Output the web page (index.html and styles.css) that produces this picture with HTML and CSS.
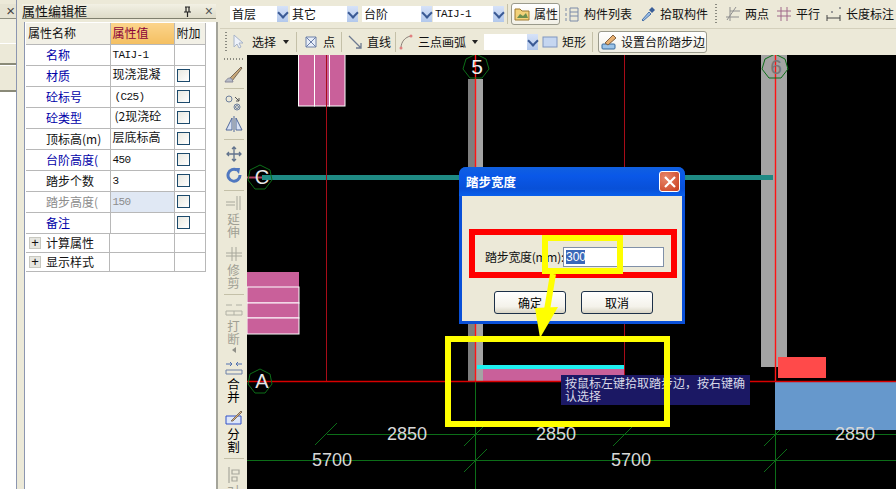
FILE: index.html
```html
<!DOCTYPE html>
<html lang="zh">
<head>
<meta charset="utf-8">
<title>属性编辑框</title>
<link rel="stylesheet" href="styles.css">
</head>
<body>
<div class="app">
  <aside class="sliver">
    <div class="sliver-head"><span class="close-x">×</span></div>
    <div class="sliver-bar"></div>
    <div class="sliver-btn first"></div>
    <div class="sliver-btn second"></div>
    <div class="sliver-list"></div>
  </aside>

  <section class="panel">
    <header class="panel-head">
      <span class="panel-title">属性编辑框</span>
      <svg class="pin" viewBox="0 0 9 11"><path d="M2 1h5M3 1v5M6 1v5M1 6h7M4.500 6v5" fill="none" stroke="#222" stroke-width="1.200"/></svg>
      <span class="panel-x">×</span>
    </header>
    <div class="panel-body">
      <table class="props">
        <colgroup><col class="c1"><col class="c2"><col class="c3"></colgroup>
        <tr class="hd"><th class="h-name">属性名称</th><th class="h-val">属性值</th><th class="h-add">附加</th></tr>
        <tr><td class="nm blue">名称</td><td class="vl mono">TAIJ-1</td><td></td></tr>
        <tr><td class="nm blue">材质</td><td class="vl up">现浇混凝</td><td><i class="cb"></i></td></tr>
        <tr><td class="nm blue">砼标号</td><td class="vl mono ind">(C25)</td><td><i class="cb"></i></td></tr>
        <tr><td class="nm blue">砼类型</td><td class="vl up ind">(2现浇砼</td><td><i class="cb"></i></td></tr>
        <tr><td class="nm">顶标高(m)</td><td class="vl up">层底标高</td><td><i class="cb"></i></td></tr>
        <tr><td class="nm blue">台阶高度(</td><td class="vl mono">450</td><td><i class="cb"></i></td></tr>
        <tr><td class="nm">踏步个数</td><td class="vl mono">3</td><td><i class="cb"></i></td></tr>
        <tr><td class="nm gray">踏步高度(</td><td class="vl mono gray shade">150</td><td><i class="cb"></i></td></tr>
        <tr><td class="nm blue">备注</td><td class="vl"></td><td><i class="cb"></i></td></tr>
        <tr class="grp"><td class="nm"><i class="plus">+</i>计算属性</td><td></td><td></td></tr>
        <tr class="grp"><td class="nm"><i class="plus">+</i>显示样式</td><td></td><td></td></tr>
      </table>
    </div>
  </section>

  <main class="work">
    <div class="bar bar-top">
      <div class="sel sel-a"><span>首层</span><i class="drop"></i></div>
      <div class="sel sel-b"><span>其它</span><i class="drop"></i></div>
      <div class="sel sel-c"><span>台阶</span><i class="drop"></i></div>
      <div class="sel sel-d"><span class="mono">TAIJ-1</span><i class="drop"></i></div>
      <span class="sep sep-attr"></span>
      <div class="tool-btn btn-attr">
        <svg class="ico" viewBox="0 0 16 16"><path d="M1 3h5l2 2h7v9H1z" fill="#f3d27a" stroke="#a07a30"/><path d="M3 12l3-4 3 2 3-3 2 5z" fill="#6d8f4e"/></svg>
        <span>属性</span>
      </div>
      <div class="tool ml-4">
        <svg class="ico" viewBox="0 0 16 16"><path d="M2 2v3M2 7v3M2 12v3M6 2h8v13H6zM6 6h8M6 10h8" fill="none" stroke="#7a8aa8"/></svg>
        <span>构件列表</span>
      </div>
      <div class="tool ml-8">
        <svg class="ico" viewBox="0 0 16 16"><path d="M2 14l7-8 2 2-8 7z" fill="#9cc0e8" stroke="#4a72a8"/><path d="M9 4l3-3 3 3-3 3z" fill="#3a5f98"/></svg>
        <span>拾取构件</span>
      </div>
      <span class="grip grip-b"></span>
      <div class="tool ml-8">
        <svg class="ico" viewBox="0 0 16 16"><path d="M1 11h13M5 5h10M5 1v14M11 1L2 14" fill="none" stroke="#8f8f8f"/></svg>
        <span>两点</span>
      </div>
      <div class="tool ml-7">
        <svg class="ico" viewBox="0 0 16 16"><path d="M1 5h14M1 10h14M5 1v14M11 1v14" fill="none" stroke="#a0688a"/></svg>
        <span>平行</span>
      </div>
      <div class="tool ml-6">
        <svg class="ico" viewBox="0 0 16 16"><path d="M1 9v6M14 9v6M1 12h13" fill="none" stroke="#444"/><path d="M5 5h2v2H5zM13 1h2v2h-2z" fill="#999"/></svg>
        <span>长度标注</span>
      </div>
    </div>

    <div class="bar bar-sub">
      <span class="grip grip-a"></span>
      <div class="tool ml-5 tight">
        <svg class="ico" viewBox="0 0 16 16"><path d="M2 1v12l3-3 2 4 2-1-2-4h4z" fill="#eef2fa" stroke="#a8b4c8"/></svg>
        <span>选择</span>
      </div>
      <i class="caret c-sel"></i>
      <span class="sep sep-sel"></span>
      <div class="tool ml-6">
        <svg class="ico" viewBox="0 0 16 16"><path d="M3 3h10v10H3zM3 3l10 10M13 3L3 13" fill="#e8eef8" stroke="#6d80a8"/></svg>
        <span>点</span>
      </div>
      <span class="sep sep-pt"></span>
      <div class="tool ml-5">
        <svg class="ico" viewBox="0 0 16 16"><path d="M2 2l12 12M14 9v5H9" fill="none" stroke="#6d7a90" stroke-width="1.300"/></svg>
        <span>直线</span>
      </div>
      <span class="sep sep-line"></span>
      <div class="tool ml-2">
        <svg class="ico" viewBox="0 0 16 16"><path d="M3 14C3 8 7 3 13 2" fill="none" stroke="#8a8078"/><circle cx="3" cy="14" r="1.500" fill="#e08080"/><circle cx="13" cy="2" r="1.500" fill="#e08080"/></svg>
        <span>三点画弧</span>
      </div>
      <i class="caret c-arc"></i>
      <div class="sel sel-e"><span></span><i class="drop"></i></div>
      <div class="tool ml-4">
        <svg class="ico" viewBox="0 0 16 16"><rect x="1" y="3" width="14" height="10" fill="#c5d6f0" stroke="#7f96c0"/></svg>
        <span>矩形</span>
      </div>
      <span class="sep sep-rect"></span>
      <div class="tool-btn btn-step">
        <svg class="ico" viewBox="0 0 16 16"><rect x="1" y="10" width="13" height="5" rx="1" fill="#9cc4e8" stroke="#386a9c"/><path d="M4 9l8-8 3 3-8 7z" fill="#e8b070" stroke="#806040"/></svg>
        <span>设置台阶踏步边</span>
      </div>
    </div>

    <div class="stage">
      <nav class="vtools">
        <span class="vgrip"></span>
        <svg class="vico i-brush" viewBox="0 0 20 20"><path d="M5 15L17 3l1 1L8 17z" fill="#c8a878" stroke="#7a6a58"/><path d="M1 18c2-4 5-5 7-3l1 3z" fill="#b8bcc8" stroke="#889"/></svg>
        <span class="vsep"></span>
        <svg class="vico i-offset" viewBox="0 0 18 16"><circle cx="4" cy="4" r="3" fill="none" stroke="#6d7f9c"/><circle cx="12" cy="12" r="3" fill="none" stroke="#6d7f9c"/><circle cx="12" cy="12" r="1.500" fill="none" stroke="#6d7f9c"/><path d="M10 2l4 4M14 3v3h-3" fill="none" stroke="#555"/></svg>
        <svg class="vico i-mirror" viewBox="0 0 18 16"><path d="M9 0v16M1 14L7 2v12zM17 14L11 2v12z" fill="#d8e2f4" stroke="#50689a"/></svg>
        <span class="vsep"></span>
        <svg class="vico i-move" viewBox="0 0 16 16"><path d="M8 1v14M1 8h14M6 3l2-2 2 2M6 13l2 2 2-2M3 6L1 8l2 2M13 6l2 2-2 2" fill="none" stroke="#60728c" stroke-width="1.300"/></svg>
        <svg class="vico i-rotate" viewBox="0 0 16 16"><path d="M11 3a6 6 0 1 0 3 5" fill="none" stroke="#5078c0" stroke-width="3"/><path d="M8 1l6 0-1 6z" fill="#5078c0"/></svg>
        <span class="vsep"></span>
        <svg class="vico i-ext" viewBox="0 0 18 16"><path d="M1 7h9M1 10h9M12 1v14M15 1v14" fill="none" stroke="#a8a89c"/></svg>
        <span class="vtxt dim">延伸</span>
        <svg class="vico i-trim" viewBox="0 0 18 14"><path d="M1 6h16M1 9h16M7 0v14M11 0v14" fill="none" stroke="#a8a89c"/></svg>
        <span class="vtxt dim">修剪</span>
        <span class="vsep"></span>
        <svg class="vico i-break" viewBox="0 0 18 14"><path d="M1 9h16v4H1zM9 9v4M1 3h6M11 3h6" fill="none" stroke="#b0b0a4"/></svg>
        <span class="vtxt dim">打断</span>
        <i class="small-tri"></i>
        <svg class="vico i-merge" viewBox="0 0 18 14"><path d="M1 9h16v4H1z" fill="none" stroke="#6d80a8"/><path d="M1 3h6M11 3h6M5 1l2 2-2 2M13 1l-2 2 2 2" fill="none" stroke="#5070b0"/></svg>
        <span class="vtxt">合并</span>
        <svg class="vico i-split" viewBox="0 0 18 15"><path d="M1 6h15v8H1z" fill="#dce6f8" stroke="#3050c8"/><path d="M6 11L16 1l1 1-9 9z" fill="#d8b080" stroke="#807060"/></svg>
        <span class="vtxt">分割</span>
        <span class="vsep"></span>
        <svg class="vico i-align" viewBox="0 0 14 16"><path d="M2 0v16M5 3h7v4H5zM5 10h5v4H5z" fill="none" stroke="#a8a89c" stroke-width="1.200"/></svg>
        <span class="vtxt dim">对</span>
      </nav>

      <svg class="canvas" viewBox="247 55 649 434">
        <g class="dimlines">
          <path d="M327 434.500H896M247 460.500H896M475.500 381V489M775.500 381V489"/>
          <path d="M315 445l22-22M464 446l22-22M613 446l22-22M764 446l22-22M464 472l23-23M764 472l23-23"/>
        </g>
        <rect class="pink" x="247" y="272" width="52" height="15"/>
        <rect class="pink-out" x="247" y="287" width="52" height="16"/>
        <rect class="pink-out" x="247" y="303" width="52" height="15"/>
        <rect class="pink-out" x="247" y="318" width="52" height="16"/>
        <rect class="pink-out" x="298.500" y="54" width="16" height="52"/>
        <rect class="pink-out" x="314.500" y="54" width="15" height="52"/>
        <rect class="pink-out" x="329.500" y="54" width="15.500" height="52"/>
        <rect class="col-lt" x="468" y="79" width="15" height="302"/>
        <rect class="col-dk" x="468" y="79" width="7" height="302"/>
        <rect class="col-lt" x="761" y="55" width="26" height="312"/>
        <rect x="483" y="368" width="141" height="13" class="pink"/>
        <rect x="477" y="365" width="148" height="4" class="cyan"/>
        <rect x="778" y="357" width="48" height="21" class="coral"/>
        <rect x="775" y="382" width="121" height="48" class="steel"/>
        <rect x="262" y="175" width="511" height="5" class="teal"/>
        <path class="red-dim" d="M326.500 55V381M624.500 55V381"/>
        <path class="red" d="M475.500 55V381M775.500 55V381"/>
        <path class="red-h" d="M247 381.500H896"/>
        <path class="red-c" d="M247 177.500H262"/>
        <polygon class="bubble" points="260,165 270,170 272,180 265,189 255,189 248,180 250,170"/>
        <polygon class="bubble" points="260,369 270,374 272,384 265,393 255,393 248,384 250,374"/>
        <polygon class="bubble" points="476,54 486,59 489,69 482,78 470,78 463,69 466,59"/>
        <polygon class="bubble" points="775,54 785,59 788,69 781,78 769,78 762,69 765,59"/>
        <text class="axis" x="262" y="184">C</text>
        <text class="axis" x="262" y="388">A</text>
        <text class="axis-lg" x="477" y="74">5</text>
        <text class="axis-lg gray-num" x="776" y="74">6</text>
        <text class="dim-t" x="407" y="440">2850</text>
        <text class="dim-t" x="556" y="440">2850</text>
        <text class="dim-t" x="855" y="440">2850</text>
        <text class="dim-t" x="332" y="466">5700</text>
        <text class="dim-t" x="631" y="466">5700</text>
      </svg>
    </div>
  </main>

  <div class="tip">按鼠标左键拾取踏步边，按右键确认选择</div>

  <div class="dialog">
    <div class="dlg-title">
      <span>踏步宽度</span>
      <span class="dlg-close"><svg viewBox="0 0 12 12"><path d="M1 1l10 10M11 1L1 11" stroke="#fff" stroke-width="2.200"/></svg></span>
    </div>
    <div class="dlg-body">
      <div class="dlg-row">
        <span class="dlg-label">踏步宽度(mm):</span>
        <div class="dlg-input"><span class="picked">300</span></div>
      </div>
      <div class="dlg-actions">
        <button class="dlg-btn">确定</button>
        <button class="dlg-btn">取消</button>
      </div>
    </div>
  </div>

  <svg class="marks" viewBox="0 0 896 489">
    <rect class="mark-red" x="472" y="232" width="202" height="43"/>
    <rect class="mark-y" x="545" y="238" width="75" height="33"/>
    <rect class="mark-y" x="448" y="339" width="219" height="85"/>
    <path class="mark-y" d="M553 274L547 310"/>
    <polygon class="mark-fill" points="535,308 558,307 540,338"/>
  </svg>
</div>
</body>
</html>
```
FILE: styles.css
```css
* { box-sizing: border-box; }
html, body { margin: 0; height: 100%; overflow: hidden; }
body { font: 12px/14px "Noto Sans CJK SC", "Liberation Sans", sans-serif; color: #111; background: #ece9d8; }
i { font-style: normal; display: block; }
.mono { font-family: "Liberation Mono", "Noto Sans CJK SC", monospace; font-size: 11px; letter-spacing: -.6px; }

.app { position: relative; display: flex; width: 896px; height: 489px; overflow: hidden; }

/* left docked stub */
.sliver { width: 17px; flex: none; display: flex; flex-direction: column; border-right: 1px solid #8c96b0; padding-top: 4px; }
.sliver-head { height: 15px; text-align: right; padding-right: 1px; background: #e6e3d2; border-bottom: 1px solid #8f8f80; }
.close-x { font: 15px/14px "Liberation Sans", sans-serif; color: #444; }
.sliver-bar { height: 24px; background: #f0eee0; }
.sliver-btn { background: #ece9d8; border-top: 1px solid #fff; border-bottom: 2px solid #8a8a78; }
.sliver-btn.first { height: 22px; }
.sliver-btn.second { height: 27px; }
.sliver-list { flex: 1; background: #fff; }

/* property panel */
.panel { width: 203px; flex: none; display: flex; flex-direction: column; padding: 4px 0 0 1px; }
.panel-head { height: 15px; margin: 0 4px 0 4px; display: flex; align-items: center; background: linear-gradient(#f2f0e4, #dedbc8); border-bottom: 1px solid #80806f; }
.panel-title { font-size: 13px; flex: 1; }
.pin { width: 9px; height: 11px; margin-right: 13px; }
.panel-x { font: 14px/14px "Liberation Sans", sans-serif; color: #555; margin-right: 3px; }
.panel-body { flex: 1; margin: 3px 2px 0 6px; background: #fff; border-left: 1px solid #8c96b0; border-right: 2px solid #a4a49a; padding: 1px 0 0 1px; }

.props { border-collapse: collapse; table-layout: fixed; width: 179px; }
.c1 { width: 84px; } .c2 { width: 64px; } .c3 { width: 31px; }
.props td, .props th { border: 1px solid #b8b8b8; border-width: 0 1px 1px 0; padding: 0; height: 21px; font-weight: 400; overflow: hidden; white-space: nowrap; text-align: left; }
.props .hd th { height: 21px; padding-left: 2px; background: #f2f0e6; }
.props .hd .h-val { background: linear-gradient(#fbd48c, #f4bf62); color: #8a0038; }
.props .nm { padding-left: 20px; }
.props .vl { padding-left: 2px; }
.props .ind { padding-left: 4px; }
.props .up { padding-bottom: 4px; }
.blue { color: #0000a8; }
.props .gray, .gray { color: #8c8c8c; }
.props .shade { background: #e0e8f4; }
.cb { width: 13px; height: 13px; margin-left: 2px; border: 1px solid #1c4a6c; background: linear-gradient(135deg, #e8e8e0, #fff); }
.props .grp td { height: 19px; }
.props .grp .nm { padding-left: 3px; display: flex; align-items: center; gap: 5px; }
.plus { width: 12px; height: 12px; background: #e6e6e0; border: 1px solid #c8c8c0; font: 13px/10px "Liberation Sans", sans-serif; text-align: center; }

/* work area */
.work { flex: 1; display: flex; flex-direction: column; min-width: 0; }
.bar { display: flex; align-items: center; background: #ece9d8; border-bottom: 1px solid #d4d0bc; }
.bar-top { height: 29px; padding-left: 10px; }
.bar-sub { height: 26px; padding-left: 5px; border-bottom: 0; }

.sel { height: 16px; background: #fff; display: flex; align-items: center; padding-left: 2px; justify-content: space-between; }
.sel-a { width: 58px; }
.sel-b { width: 68px; margin-left: 2px; }
.sel-c { width: 70px; margin-left: 4px; }
.sel-d { width: 71px; margin-left: 1px; }
.sel-e { width: 54px; margin-left: 6px; }
.drop { width: 11px; height: 16px; background: linear-gradient(#d6e2f8, #b2c8ec); position: relative; }
.drop::after { content: ""; position: absolute; left: 2px; top: 3px; width: 6px; height: 6px; border: solid #3a5a94; border-width: 0 2px 2px 0; transform: rotate(45deg); }

.sep { width: 1px; height: 20px; background: #c4c0a8; flex: none; }
.sep-attr { margin-left: 3px; }
.sep-sel { margin-left: 7px; }
.sep-pt { margin-left: 6px; }
.sep-line { margin-left: 4px; }
.sep-rect { margin-left: 6px; }
.grip { width: 2px; height: 20px; flex: none; background: repeating-linear-gradient(#8a8a80 0 1px, transparent 1px 3px); }
.grip-b { margin-left: 7px; }

.tool { display: flex; align-items: center; gap: 4px; white-space: nowrap; flex: none; }
.ico { width: 16px; height: 16px; flex: none; }
.ml-2 { margin-left: 2px; } .ml-4 { margin-left: 4px; } .ml-5 { margin-left: 5px; }
.ml-6 { margin-left: 6px; } .ml-7 { margin-left: 7px; } .ml-8 { margin-left: 8px; }
.tool-btn { display: flex; align-items: center; height: 22px; flex: none; border: 1px solid #9a9a8c; border-radius: 3px; background: linear-gradient(#fff, #f2f0e6); white-space: nowrap; padding-left: 2px; gap: 4px; }
.btn-attr { width: 49px; margin-left: 3px; }
.btn-step { width: 109px; margin-left: 5px; font-size: 12px; }
.caret { width: 0; height: 0; border: 3.500px solid transparent; border-top: 4px solid #222; border-bottom: 0; flex: none; }
.c-sel { margin-left: 7px; }
.c-arc { margin-left: 6px; }

/* drawing area */
.stage { flex: 1; display: flex; min-height: 0; background: #000; }
.vtools { width: 27px; flex: none; background: #ece9d8; display: flex; flex-direction: column; align-items: center; padding-top: 3px; color: #000; overflow: hidden; }
.vgrip { width: 20px; height: 2px; flex: none; background: repeating-linear-gradient(90deg, #8a8a80 0 1px, transparent 1px 3px); }
.vsep { width: 20px; height: 1px; flex: none; background: #c4c0a8; }
.vtxt + .vsep { margin-top: 5px; }
.vico { flex: none; display: block; }
.vtxt { width: 13px; font-size: 12.500px; line-height: 13px; text-align: center; flex: none; white-space: normal; }
.vtxt.dim { color: #a0a094; }
.i-brush { width: 20px; height: 20px; margin: 4px 0; }
.i-offset { width: 18px; height: 16px; margin: 6px 0 5px; }
.i-mirror { width: 18px; height: 16px; margin-bottom: 7px; }
.i-move { width: 16px; height: 16px; margin: 6px 0 5px; }
.i-rotate { width: 16px; height: 16px; margin-bottom: 7px; }
.i-ext { width: 18px; height: 16px; margin: 4px 0 1px; }
.i-trim { width: 18px; height: 14px; margin: 9px 0 2px; }
.i-break { width: 18px; height: 14px; margin: 7px 0 3px; }
.i-merge { width: 18px; height: 14px; margin: 8px 0 2px; }
.i-split { width: 18px; height: 15px; margin: 7px 0 2px; }
.i-align { width: 14px; height: 16px; margin: 8px 0 1px; }
.small-tri { width: 0; height: 0; margin-top: 2px; border: 3px solid transparent; border-right: 4px solid #909088; border-left: 0; }

.canvas { flex: 1; display: block; min-width: 0; height: 434px; }
.dimlines path { fill: none; stroke: #0c6e18; stroke-width: 1; }
.pink { fill: #c9609a; }
.pink-out { fill: #c9609a; stroke: #fff; stroke-width: 1; }
.col-lt { fill: #a4a4a4; }
.col-dk { fill: #7e7e7e; }
.cyan { fill: #1ef0f0; }
.coral { fill: #ff4a4a; }
.steel { fill: #6698cc; }
.teal { fill: #1f8a84; }
.red { stroke: #ff1414; stroke-width: 1.400; fill: none; }
.red-dim { stroke: #a80c18; fill: none; }
.red-h { stroke: #d80000; stroke-width: 1.400; fill: none; }
.red-c { stroke: #b04060; stroke-width: 2; fill: none; }
.bubble { fill: none; stroke: #0c6e18; stroke-width: 1; }
.axis { font: 20px "Liberation Sans", sans-serif; fill: #e8e8e8; text-anchor: middle; }
.axis-lg { font: 21px "Liberation Sans", sans-serif; fill: #f0f0f0; text-anchor: middle; }
.axis-lg.gray-num { fill: #777; }
.dim-t { font: 18px "Liberation Sans", sans-serif; fill: #d8d8d8; text-anchor: middle; }

/* overlays */
.tip { position: absolute; left: 561px; top: 375px; width: 189px; height: 30px; padding: 1px 4px; background: #1b1864; color: #d8d8e8; font-size: 12px; line-height: 13px; }

.dialog { position: absolute; left: 459px; top: 167px; width: 226px; height: 157px; border-radius: 7px 7px 0 0; background: #0a50d8; padding: 0 3px 3px; display: flex; flex-direction: column; }
.dlg-title { height: 29px; flex: none; margin: 0 -3px; padding: 0 5px 0 7px; border-radius: 7px 7px 0 0; display: flex; align-items: center; justify-content: space-between; background: linear-gradient(#1060e0, #0a58e8 30%, #0850d8 75%, #0a60ec); color: #fff; font-weight: 700; font-size: 12.500px; }
.dlg-close { width: 21px; height: 21px; display: flex; align-items: center; justify-content: center; border: 1px solid #fff; border-radius: 3px; background: radial-gradient(circle at 30% 30%, #e8886c, #c83c1c); }
.dlg-close svg { width: 12px; height: 12px; }
.dlg-body { flex: 1; background: #ece9d8; padding: 51px 0 0 23px; display: flex; flex-direction: column; }
.dlg-row { display: flex; align-items: center; height: 20px; }
.dlg-label { width: 78px; flex: none; white-space: nowrap; font-size: 12px; letter-spacing: -.3px; }
.dlg-input { width: 101px; height: 20px; background: #fff; border: 1px solid #8090a8; padding: 2px 0 0 2px; }
.picked { display: block; width: 19px; height: 14px; background: #3a68b8; color: #fff; font: 12px/14px "Liberation Sans", sans-serif; }
.dlg-actions { display: flex; gap: 15px; margin: 24px 0 0 9px; }
.dlg-btn { width: 72px; height: 23px; padding: 0; border: 1px solid #1c3048; border-radius: 3px; background: linear-gradient(#fff, #f4f2ea 70%, #d8d4c4); font: 12px/14px "Noto Sans CJK SC", sans-serif; color: #000; }

.marks { position: absolute; left: 0; top: 0; width: 896px; height: 489px; pointer-events: none; }
.mark-red { fill: none; stroke: #ff0000; stroke-width: 6; }
.mark-y { fill: none; stroke: #ffff00; stroke-width: 6; }
.mark-fill { fill: #ffff00; }
```
